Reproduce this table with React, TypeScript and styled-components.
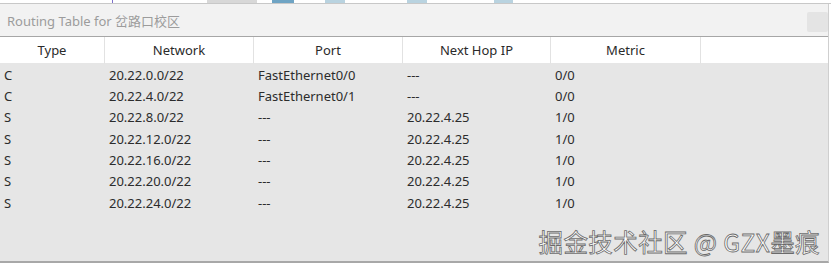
import React from "react";
import styled, { createGlobalStyle } from "styled-components";

const GlobalStyle = createGlobalStyle`
  html, body {
    margin: 0;
    padding: 0;
    background: #ffffff;
    overflow: hidden;
  }
  body {
    font-family: "Noto Sans", "Open Sans", "Noto Sans CJK SC", sans-serif;
  }
`;

const Screen = styled.div`
  width: 831px;
  height: 266px;
  display: flex;
  flex-direction: column;
  background: #ffffff;
  position: relative;
`;

// sliver of the window behind, peeking over the dialog
const BackStrip = styled.div`
  height: 3px;
  display: flex;
  align-items: flex-end;
  border-bottom: 1px solid #c8c8c8;
  overflow: hidden;
`;

const BackPiece = styled.span<{ $left: number; $w: number; $c: string }>`
  margin-left: ${(p) => p.$left}px;
  width: ${(p) => p.$w}px;
  height: 3px;
  background: ${(p) => p.$c};
  flex-shrink: 0;
`;

const Dialog = styled.div`
  flex: 1;
  display: flex;
  flex-direction: column;
  margin-right: 2px;
  border-right: 1px solid #cfcfcf;
  border-bottom: 2px solid #a8a8a8;
  margin-bottom: 3px;
`;

const TitleBar = styled.div`
  height: 32px;
  display: flex;
  align-items: center;
  justify-content: space-between;
  background: #f2f2f2;
  border-bottom: 1px solid #a6a6a6;
  padding-left: 7px;
`;

const Title = styled.span`
  font-size: 13px;
  color: #9c9c9c;
  font-family: "Noto Sans", "Noto Sans CJK SC", sans-serif;
`;

const CloseButton = styled.div`
  width: 21px;
  height: 20px;
  margin-top: 4px;
  background: #e4e4e4;
  border-radius: 2px;
`;

const Grid = styled.div`
  display: grid;
  grid-template-columns: 105px 149px 149px 148px 150px 1fr;
`;

const HeaderCell = styled.div<{ $last?: boolean }>`
  height: 26px;
  display: flex;
  align-items: center;
  justify-content: center;
  background: #ffffff;
  font-size: 13px;
  color: #2a2a2a;
  border-right: ${(p) => (p.$last ? "none" : "1px solid #e2e2e2")};
  border-bottom: 1px solid #e6e6e6;
`;

const Body = styled.div`
  flex: 1;
  background: #e6e6e6;
`;

const Row = styled(Grid)`
  height: 21.33px;
  align-items: center;
`;

const Cell = styled.div`
  font-size: 13px;
  color: #2c2c2c;
  padding-left: 4px;
  white-space: nowrap;
`;

const Watermark = styled.div`
  position: absolute;
  right: 11px;
  bottom: 7px;
  font-size: 24.5px;
  letter-spacing: 0.4px;
  color: #ffffff;
  font-family: "Noto Sans CJK SC", "Noto Sans", sans-serif;
  -webkit-text-stroke: 0.8px #6a6a6a;
`;

const columns = ["Type", "Network", "Port", "Next Hop IP", "Metric", ""];

const routes = [
  ["C", "20.22.0.0/22", "FastEthernet0/0", "---", "0/0"],
  ["C", "20.22.4.0/22", "FastEthernet0/1", "---", "0/0"],
  ["S", "20.22.8.0/22", "---", "20.22.4.25", "1/0"],
  ["S", "20.22.12.0/22", "---", "20.22.4.25", "1/0"],
  ["S", "20.22.16.0/22", "---", "20.22.4.25", "1/0"],
  ["S", "20.22.20.0/22", "---", "20.22.4.25", "1/0"],
  ["S", "20.22.24.0/22", "---", "20.22.4.25", "1/0"],
];

const backPieces = [
  { left: 112, w: 1, c: "#7d6fc9" },
  { left: 94, w: 50, c: "#d8d8d8" },
  { left: 15, w: 22, c: "#6fa4c4" },
  { left: 31, w: 20, c: "#b9d3e0" },
  { left: 62, w: 20, c: "#b9d3e0" },
  { left: 67, w: 19, c: "#b9d3e0" },
];

export default function App() {
  return (
    <>
      <GlobalStyle />
      <Screen>
        <BackStrip>
          {backPieces.map((b, i) => (
            <BackPiece key={i} $left={b.left} $w={b.w} $c={b.c} />
          ))}
        </BackStrip>
        <Dialog>
          <TitleBar>
            <Title>Routing Table for 岔路口校区</Title>
            <CloseButton />
          </TitleBar>
          <Grid>
            {columns.map((c, i) => (
              <HeaderCell key={i} $last={i === columns.length - 1}>
                {c}
              </HeaderCell>
            ))}
          </Grid>
          <Body>
            {routes.map((r, i) => (
              <Row key={i}>
                {r.map((v, j) => (
                  <Cell key={j}>{v}</Cell>
                ))}
              </Row>
            ))}
          </Body>
        </Dialog>
        <Watermark>掘金技术社区 @ GZX墨痕</Watermark>
      </Screen>
    </>
  );
}
